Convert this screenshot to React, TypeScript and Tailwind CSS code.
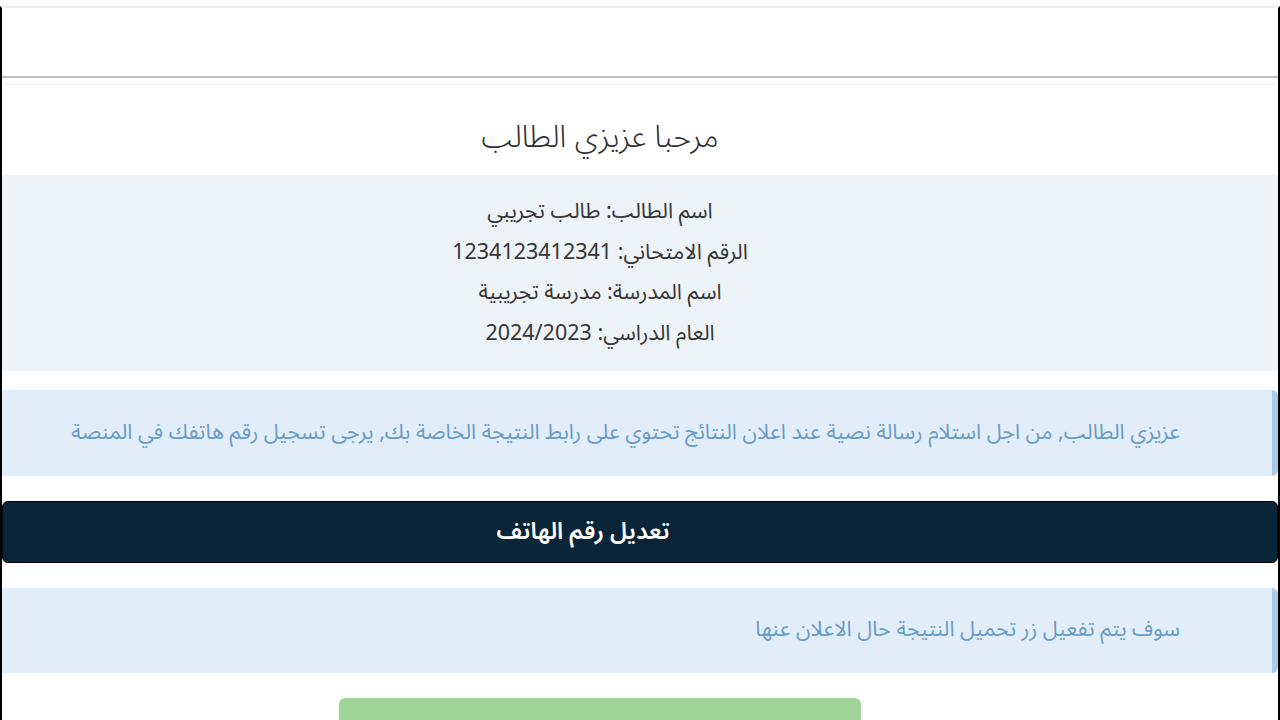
const INFO = [
  "اسم الطالب: طالب تجريبي",
  "الرقم الامتحاني: 1234123412341",
  "اسم المدرسة: مدرسة تجريبية",
  "العام الدراسي: 2024/2023",
];

function Alert({ children, className }: { children: React.ReactNode; className?: string }) {
  return (
    <div
      className={`flex items-center justify-start rounded-r-md border-r-[6px] border-[#a9cbea] bg-[#e1eef9] pr-[92px] text-[21.4px] text-[#6a9bc6] ${className ?? ""}`}
    >
      {children}
    </div>
  );
}

export default function App() {
  return (
    <div
      dir="rtl"
      className="h-[720px] w-full overflow-hidden bg-white pt-[6px]"
      style={{ fontFamily: "'Noto Sans Arabic', 'Noto Sans', 'DejaVu Sans', sans-serif" }}
    >
      <div className="h-[714px] border-t-2 border-r-2 border-l-2 border-t-[#ececec] border-r-black border-l-black">
        <div className="h-[70px] border-b-2 border-[#bdbdbd]" />
        <div className="mt-[6px] border-t border-[#f2f2f2]" />

        <div className="flex justify-center pt-[30px] pr-[80px] pb-[16px]">
          <h1 className="text-[31px] font-light leading-[44px] text-[#2f2f2f]">مرحبا عزيزي الطالب</h1>
        </div>

        <div className="bg-[#eef3f8] pt-[16px] pb-[18px]">
          <div className="flex flex-col items-center pr-[80px]">
            {INFO.map((line) => (
              <p key={line} className="text-[21.5px] leading-[40.5px] text-[#363636]">
                {line}
              </p>
            ))}
          </div>
        </div>

        <Alert className="mt-[19px] h-[86px]">
          عزيزي الطالب, من اجل استلام رسالة نصية عند اعلان النتائج تحتوي على رابط النتيجة الخاصة بك, يرجى تسجيل رقم هاتفك في المنصة
        </Alert>

        <div className="mt-[25px] flex h-[62px] items-center justify-center rounded-md border border-black bg-[#0b2538] pr-[114px]">
          <span className="text-[23.5px] font-semibold text-white">تعديل رقم الهاتف</span>
        </div>

        <Alert className="mt-[25px] h-[85px]">سوف يتم تفعيل زر تحميل النتيجة حال الاعلان عنها</Alert>

        <div className="flex justify-center pt-[25px] pr-[80px]">
          <div className="h-[40px] w-[522px] rounded-md bg-[#9fd598]" />
        </div>
      </div>
    </div>
  );
}
